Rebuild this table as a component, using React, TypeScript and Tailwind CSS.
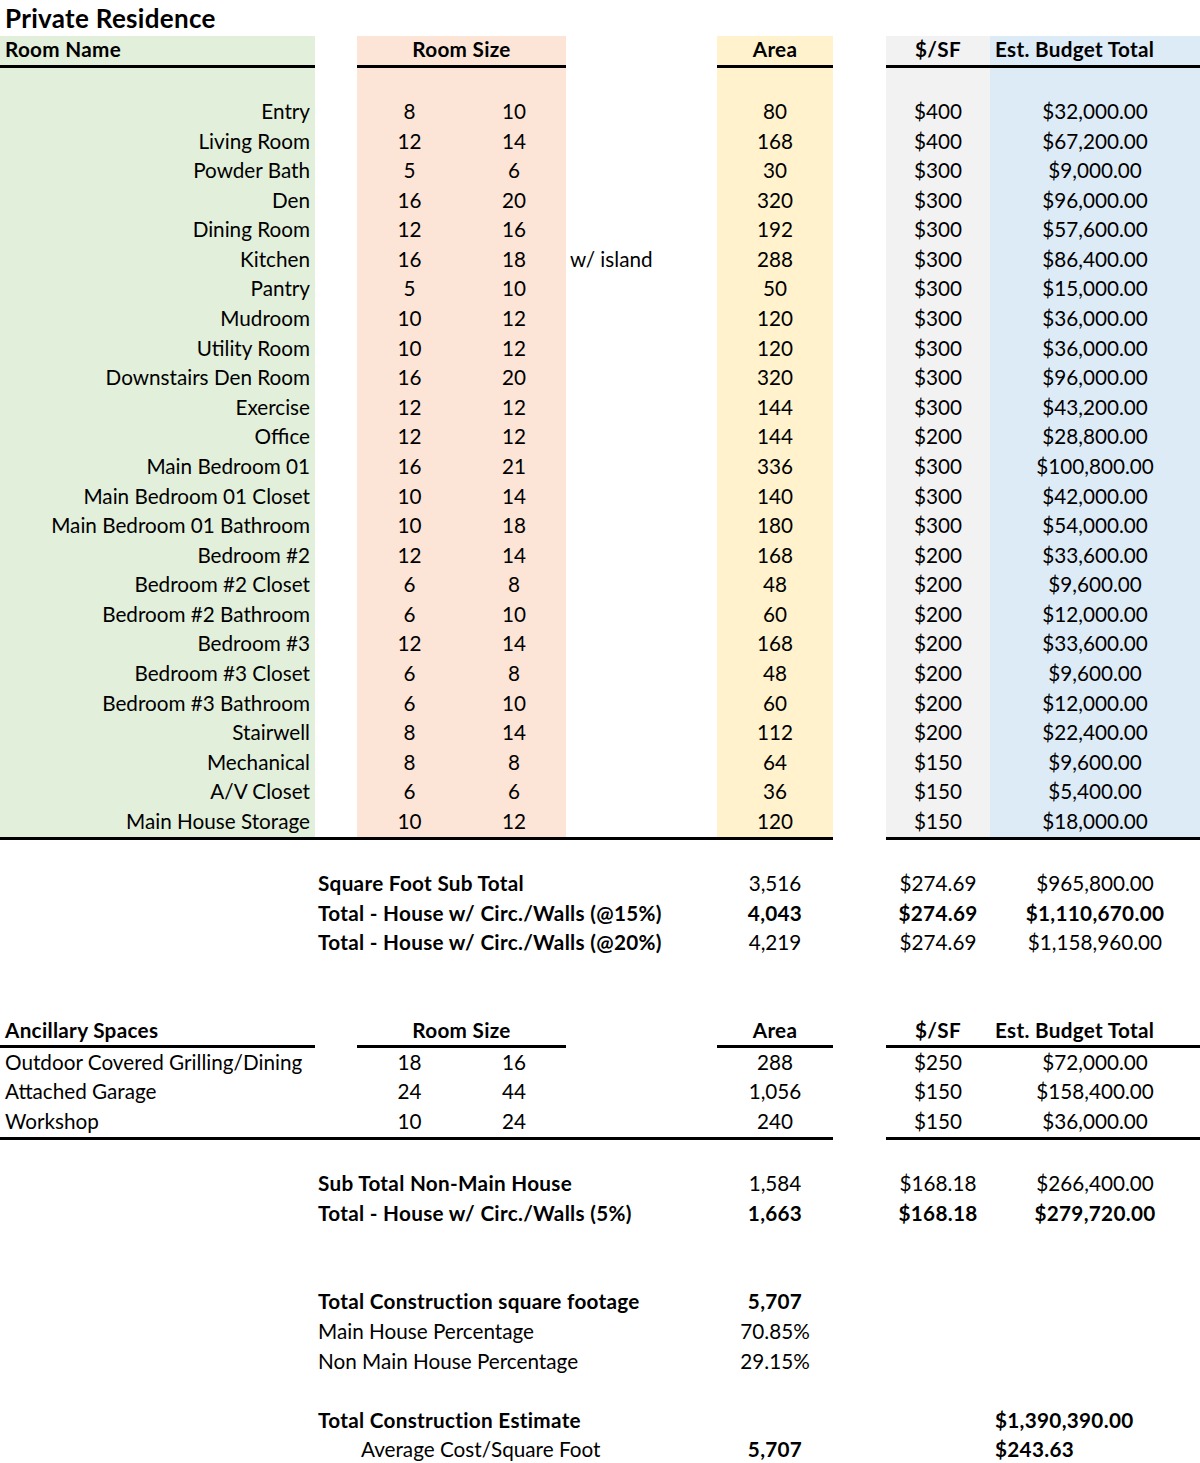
import React from "react";

const GRID =
  "grid grid-cols-[315px_42px_105px_104px_151px_116px_53px_104px_210px]";

type Room = [string, number, number, string, string, string, string];

const rooms: Room[] = [
  ["Entry", 8, 10, "", "80", "$400", "$32,000.00"],
  ["Living Room", 12, 14, "", "168", "$400", "$67,200.00"],
  ["Powder Bath", 5, 6, "", "30", "$300", "$9,000.00"],
  ["Den", 16, 20, "", "320", "$300", "$96,000.00"],
  ["Dining Room", 12, 16, "", "192", "$300", "$57,600.00"],
  ["Kitchen", 16, 18, "w/ island", "288", "$300", "$86,400.00"],
  ["Pantry", 5, 10, "", "50", "$300", "$15,000.00"],
  ["Mudroom", 10, 12, "", "120", "$300", "$36,000.00"],
  ["Utility Room", 10, 12, "", "120", "$300", "$36,000.00"],
  ["Downstairs Den Room", 16, 20, "", "320", "$300", "$96,000.00"],
  ["Exercise", 12, 12, "", "144", "$300", "$43,200.00"],
  ["Office", 12, 12, "", "144", "$200", "$28,800.00"],
  ["Main Bedroom 01", 16, 21, "", "336", "$300", "$100,800.00"],
  ["Main Bedroom 01 Closet", 10, 14, "", "140", "$300", "$42,000.00"],
  ["Main Bedroom 01 Bathroom", 10, 18, "", "180", "$300", "$54,000.00"],
  ["Bedroom #2", 12, 14, "", "168", "$200", "$33,600.00"],
  ["Bedroom #2 Closet", 6, 8, "", "48", "$200", "$9,600.00"],
  ["Bedroom #2 Bathroom", 6, 10, "", "60", "$200", "$12,000.00"],
  ["Bedroom #3", 12, 14, "", "168", "$200", "$33,600.00"],
  ["Bedroom #3 Closet", 6, 8, "", "48", "$200", "$9,600.00"],
  ["Bedroom #3 Bathroom", 6, 10, "", "60", "$200", "$12,000.00"],
  ["Stairwell", 8, 14, "", "112", "$200", "$22,400.00"],
  ["Mechanical", 8, 8, "", "64", "$150", "$9,600.00"],
  ["A/V Closet", 6, 6, "", "36", "$150", "$5,400.00"],
  ["Main House Storage", 10, 12, "", "120", "$150", "$18,000.00"],
];

const ancillary: Room[] = [
  ["Outdoor Covered Grilling/Dining", 18, 16, "", "288", "$250", "$72,000.00"],
  ["Attached Garage", 24, 44, "", "1,056", "$150", "$158,400.00"],
  ["Workshop", 10, 24, "", "240", "$150", "$36,000.00"],
];

const cell = "flex items-center pb-[2px] whitespace-nowrap";
const mid = "flex items-center justify-center pb-[2px] whitespace-nowrap";
const line = "border-b-[3px] border-black";
const bold = "font-bold tracking-[0.3px]";

const RoomRow = ({ r, last }: { r: Room; last?: boolean }) => (
  <div className={`${GRID} ${last ? "h-[32.58px]" : "h-[29.58px]"}`}>
    <div className={`${cell} justify-end pr-[5px] bg-[#e2efda] ${last ? line : ""}`}>{r[0]}</div>
    <div className={last ? line : ""} />
    <div className={`${mid} bg-[#fce4d6] ${last ? line : ""}`}>{r[1]}</div>
    <div className={`${mid} bg-[#fce4d6] ${last ? line : ""}`}>{r[2]}</div>
    <div className={`${cell} pl-[4px] ${last ? line : ""}`}>{r[3]}</div>
    <div className={`${mid} bg-[#fff2cc] ${last ? line : ""}`}>{r[4]}</div>
    <div />
    <div className={`${mid} bg-[#f2f2f2] ${last ? line : ""}`}>{r[5]}</div>
    <div className={`${mid} bg-[#ddebf7] ${last ? line : ""}`}>{r[6]}</div>
  </div>
);

const AncRow = ({ r, last }: { r: Room; last?: boolean }) => (
  <div className={`${GRID} ${last ? "h-[32.58px]" : "h-[29.58px]"}`}>
    <div className={`${cell} pl-[5px] ${last ? line : ""}`}>{r[0]}</div>
    <div className={last ? line : ""} />
    <div className={`${mid} ${last ? line : ""}`}>{r[1]}</div>
    <div className={`${mid} ${last ? line : ""}`}>{r[2]}</div>
    <div className={last ? line : ""} />
    <div className={`${mid} ${last ? line : ""}`}>{r[4]}</div>
    <div />
    <div className={`${mid} ${last ? line : ""}`}>{r[5]}</div>
    <div className={`${mid} ${last ? line : ""}`}>{r[6]}</div>
  </div>
);

const Blank = () => <div className="h-[29.58px]" />;

type Sum = {
  label: string;
  area: string;
  rate?: string;
  budget?: string;
  bold?: boolean;
  labelBold?: boolean;
};

const SumRow = ({ s }: { s: Sum }) => (
  <div className={`${GRID} h-[29.58px] ${s.bold ? bold : ""}`}>
    <div />
    <div className={`${cell} col-span-4 pl-[3px] ${s.labelBold ? bold : ""}`}>{s.label}</div>
    <div className={mid}>{s.area}</div>
    <div />
    <div className={mid}>{s.rate}</div>
    <div className={mid}>{s.budget}</div>
  </div>
);

export default function App() {
  return (
    <div className="w-[1200px] bg-white text-black text-[20.7px] leading-none font-['Lato',sans-serif]">
      {/* Title */}
      <div className={`h-[36px] flex items-center pl-[5px] pb-[1px] text-[26px] ${bold}`}>
        Private Residence
      </div>

      {/* Main header */}
      <div className={`${GRID} h-[32px] ${bold}`}>
        <div className={`${cell} pl-[5px] bg-[#e2efda] ${line}`}>Room Name</div>
        <div />
        <div className={`${mid} col-span-2 bg-[#fce4d6] ${line}`}>Room Size</div>
        <div />
        <div className={`${mid} bg-[#fff2cc] ${line}`}>Area</div>
        <div />
        <div className={`${mid} bg-[#f2f2f2] ${line}`}>$/SF</div>
        <div className={`${cell} pl-[5px] bg-[#ddebf7] ${line}`}>Est. Budget Total</div>
      </div>

      {/* Blank coloured row */}
      <div className={`${GRID} h-[29.58px]`}>
        <div className="bg-[#e2efda]" />
        <div />
        <div className="col-span-2 bg-[#fce4d6]" />
        <div />
        <div className="bg-[#fff2cc]" />
        <div />
        <div className="bg-[#f2f2f2]" />
        <div className="bg-[#ddebf7]" />
      </div>

      {rooms.map((r, i) => (
        <RoomRow key={r[0]} r={r} last={i === rooms.length - 1} />
      ))}

      <Blank />
      <SumRow s={{ label: "Square Foot Sub Total", area: "3,516", rate: "$274.69", budget: "$965,800.00", labelBold: true }} />
      <SumRow s={{ label: "Total - House w/ Circ./Walls (@15%)", area: "4,043", rate: "$274.69", budget: "$1,110,670.00", bold: true }} />
      <SumRow s={{ label: "Total - House w/ Circ./Walls (@20%)", area: "4,219", rate: "$274.69", budget: "$1,158,960.00", labelBold: true }} />
      <Blank />
      <Blank />

      {/* Ancillary header */}
      <div className={`${GRID} h-[30.8px] ${bold}`}>
        <div className={`${cell} pl-[5px] ${line}`}>Ancillary Spaces</div>
        <div />
        <div className={`${mid} col-span-2 ${line}`}>Room Size</div>
        <div />
        <div className={`${mid} ${line}`}>Area</div>
        <div />
        <div className={`${mid} ${line}`}>$/SF</div>
        <div className={`${cell} pl-[5px] ${line}`}>Est. Budget Total</div>
      </div>

      {ancillary.map((r, i) => (
        <AncRow key={r[0]} r={r} last={i === ancillary.length - 1} />
      ))}

      <Blank />
      <SumRow s={{ label: "Sub Total Non-Main House", area: "1,584", rate: "$168.18", budget: "$266,400.00", labelBold: true }} />
      <SumRow s={{ label: "Total - House w/ Circ./Walls (5%)", area: "1,663", rate: "$168.18", budget: "$279,720.00", bold: true }} />
      <Blank />
      <Blank />
      <SumRow s={{ label: "Total Construction square footage", area: "5,707", bold: true }} />
      <SumRow s={{ label: "Main House Percentage", area: "70.85%" }} />
      <SumRow s={{ label: "Non Main House Percentage", area: "29.15%" }} />
      <Blank />

      {/* Estimate */}
      <div className={`${GRID} h-[29.58px] ${bold}`}>
        <div />
        <div className={`${cell} col-span-4 pl-[3px]`}>Total Construction Estimate</div>
        <div />
        <div />
        <div />
        <div className={`${cell} pl-[5px]`}>$1,390,390.00</div>
      </div>
      <div className={`${GRID} h-[29.58px]`}>
        <div />
        <div />
        <div className={`${cell} col-span-3 pl-[4px]`}>Average Cost/Square Foot</div>
        <div className={`${mid} ${bold}`}>5,707</div>
        <div />
        <div />
        <div className={`${cell} pl-[5px] ${bold}`}>$243.63</div>
      </div>
    </div>
  );
}
